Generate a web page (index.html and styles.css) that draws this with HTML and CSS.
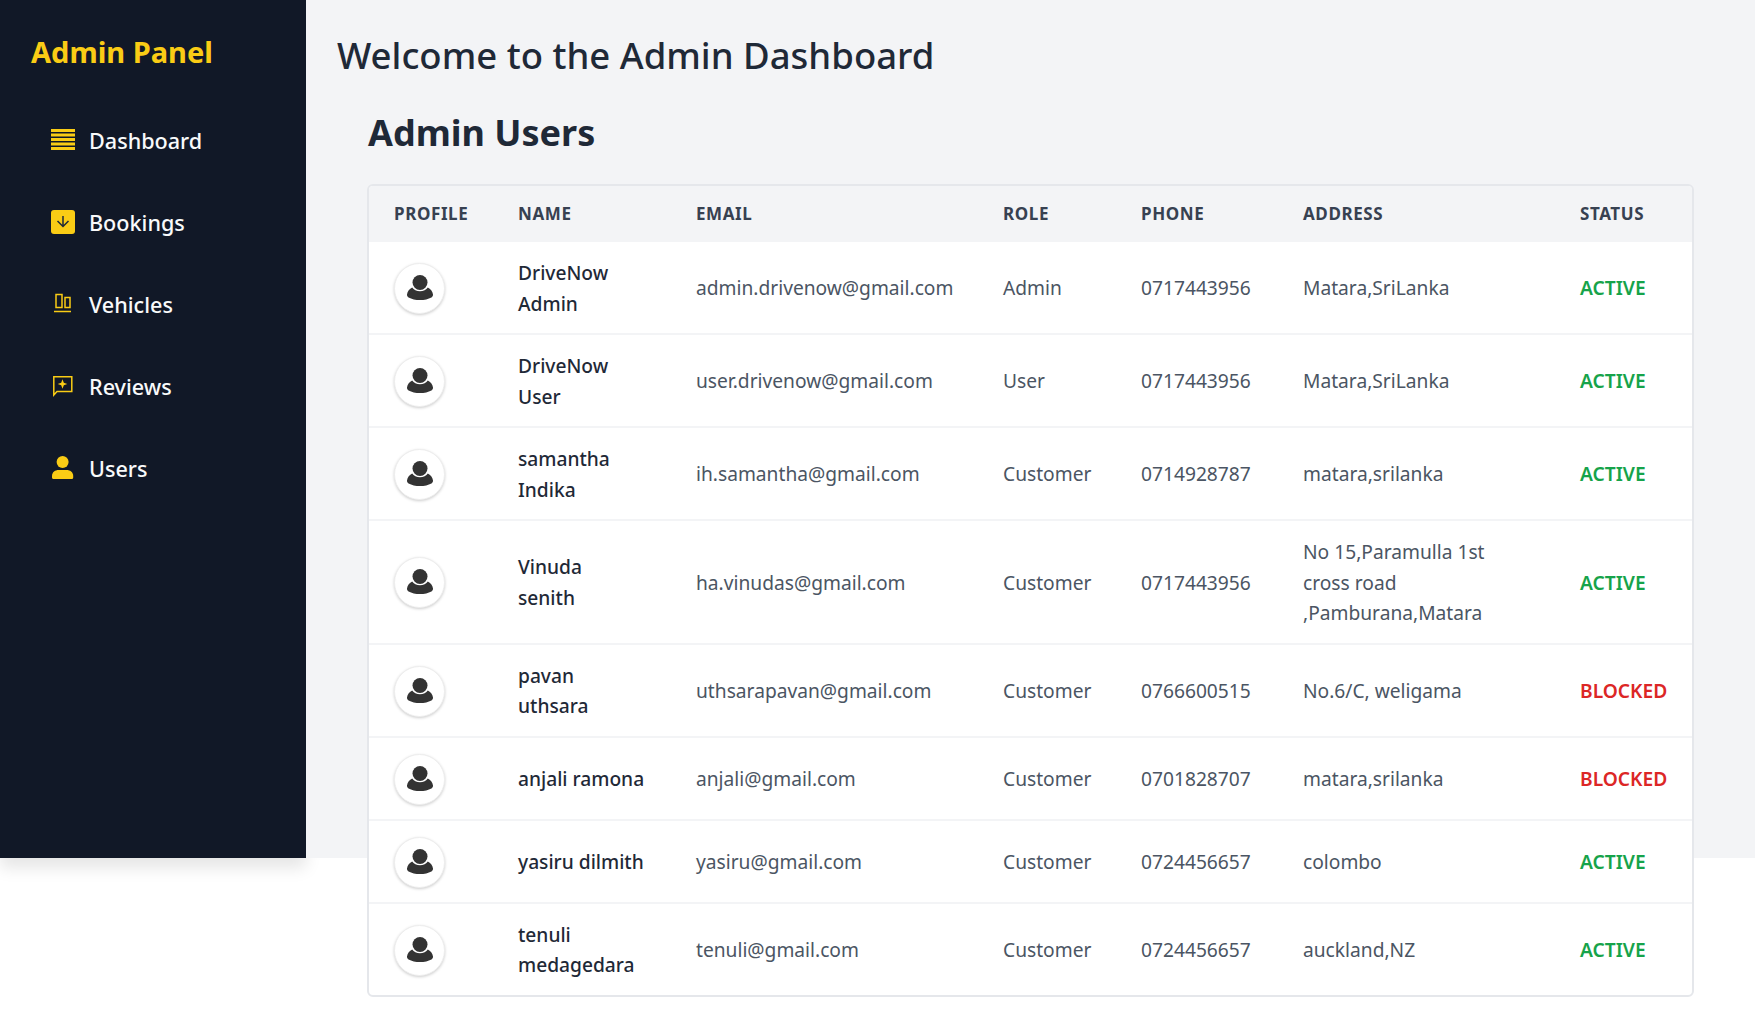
FILE: index.html
```html
<!DOCTYPE html>
<html lang="en">
<head>
    <meta charset="UTF-8">
    <title>Admin Dashboard</title>
    <link rel="stylesheet" href="styles.css">
</head>
<body>
    <svg class="sprite" width="0" height="0">
        <symbol id="avatar" viewBox="0 0 26 27">
            <circle cx="13" cy="7.500" r="7.500" fill="#333"/>
            <path d="M5.200 12.500c1.500 2.400 4.400 3.700 7.800 3.700s6.300-1.300 7.800-3.700c2.700 1.200 4.800 3.700 5.200 7 .1 1.300-.4 2.300-1.600 3-3 1.700-7 2.600-11.400 2.600s-8.400-.9-11.400-2.600C.4 21.800-.1 20.800 0 19.500c.4-3.300 2.500-5.800 5.200-7z" fill="#333"/>
        </symbol>
    </svg>

    <div class="layout">
        <aside class="sidebar">
            <h2 class="brand">Admin Panel</h2>
            <nav class="nav">
                <a class="nav-item" href="#">
                    <svg class="nav-icon" viewBox="0 0 24 24" fill="#facc15">
                        <path d="M0 1h24v3H0zM0 5.500h24v3H0zM0 10h24v3H0zM0 14.500h24v3H0zM0 19h24v3H0z"/>
                    </svg>
                    Dashboard
                </a>
                <a class="nav-item" href="#">
                    <svg class="nav-icon" viewBox="0 0 24 24">
                        <rect width="24" height="24" rx="3" fill="#facc15"/>
                        <path d="M12 6v10M6.500 11l5.500 5.500 5.500-5.500" fill="none" stroke="#1f2937" stroke-width="1.500"/>
                    </svg>
                    Bookings
                </a>
                <a class="nav-item" href="#">
                    <svg class="nav-icon" viewBox="0 0 24 24" fill="none" stroke="#facc15" stroke-width="1.500">
                        <path d="M5 2.600h6v13H5zM14 5.600h5v10h-5zM3 19.600h17"/>
                    </svg>
                    Vehicles
                </a>
                <a class="nav-item" href="#">
                    <svg class="nav-icon" viewBox="0 0 24 24">
                        <path d="M2.800 2.800h18v14.700H6L2.800 21z" fill="none" stroke="#facc15" stroke-width="1.500"/>
                        <path d="M11.500 5.200l1.300 3.500 3.500 1.300-3.500 1.300-1.300 3.500-1.300-3.500L6.700 10l3.500-1.300z" fill="#facc15"/>
                    </svg>
                    Reviews
                </a>
                <a class="nav-item" href="#">
                    <svg class="nav-icon" viewBox="0 0 24 24" fill="#facc15">
                        <circle cx="11.600" cy="6" r="6"/>
                        <path d="M2.500 23c-1 0-1.500-.6-1.500-1.500v-1.500c0-4 3.300-6 6.500-6h8.200c3.200 0 6.500 2 6.500 6v1.500c0 .9-.5 1.500-1.500 1.500z"/>
                    </svg>
                    Users
                </a>
            </nav>
        </aside>

        <main class="content">
            <h1 class="page-title">Welcome to the Admin Dashboard</h1>
            <section class="users">
                <h2 class="users-title">Admin Users</h2>
                <div class="table-wrap">
                    <table class="users-table">
                        <colgroup>
                            <col class="col-profile">
                            <col class="col-name">
                            <col class="col-email">
                            <col class="col-role">
                            <col class="col-phone">
                            <col class="col-address">
                            <col class="col-status">
                        </colgroup>
                        <thead>
                            <tr>
                                <th>Profile</th>
                                <th>Name</th>
                                <th>Email</th>
                                <th>Role</th>
                                <th>Phone</th>
                                <th>Address</th>
                                <th>Status</th>
                            </tr>
                        </thead>
                        <tbody>
                            <tr>
                                <td><span class="avatar"><svg><use href="#avatar"/></svg></span></td>
                                <td class="name">DriveNow<br>Admin</td>
                                <td>admin.drivenow@gmail.com</td>
                                <td>Admin</td>
                                <td>0717443956</td>
                                <td>Matara,SriLanka</td>
                                <td class="active">ACTIVE</td>
                            </tr>
                            <tr>
                                <td><span class="avatar"><svg><use href="#avatar"/></svg></span></td>
                                <td class="name">DriveNow<br>User</td>
                                <td>user.drivenow@gmail.com</td>
                                <td>User</td>
                                <td>0717443956</td>
                                <td>Matara,SriLanka</td>
                                <td class="active">ACTIVE</td>
                            </tr>
                            <tr>
                                <td><span class="avatar"><svg><use href="#avatar"/></svg></span></td>
                                <td class="name">samantha<br>Indika</td>
                                <td>ih.samantha@gmail.com</td>
                                <td>Customer</td>
                                <td>0714928787</td>
                                <td>matara,srilanka</td>
                                <td class="active">ACTIVE</td>
                            </tr>
                            <tr>
                                <td><span class="avatar"><svg><use href="#avatar"/></svg></span></td>
                                <td class="name">Vinuda<br>senith</td>
                                <td>ha.vinudas@gmail.com</td>
                                <td>Customer</td>
                                <td>0717443956</td>
                                <td>No 15,Paramulla 1st<br>cross road<br>,Pamburana,Matara</td>
                                <td class="active">ACTIVE</td>
                            </tr>
                            <tr>
                                <td><span class="avatar"><svg><use href="#avatar"/></svg></span></td>
                                <td class="name">pavan<br>uthsara</td>
                                <td>uthsarapavan@gmail.com</td>
                                <td>Customer</td>
                                <td>0766600515</td>
                                <td>No.6/C, weligama</td>
                                <td class="blocked">BLOCKED</td>
                            </tr>
                            <tr>
                                <td><span class="avatar"><svg><use href="#avatar"/></svg></span></td>
                                <td class="name">anjali ramona</td>
                                <td>anjali@gmail.com</td>
                                <td>Customer</td>
                                <td>0701828707</td>
                                <td>matara,srilanka</td>
                                <td class="blocked">BLOCKED</td>
                            </tr>
                            <tr>
                                <td><span class="avatar"><svg><use href="#avatar"/></svg></span></td>
                                <td class="name">yasiru dilmith</td>
                                <td>yasiru@gmail.com</td>
                                <td>Customer</td>
                                <td>0724456657</td>
                                <td>colombo</td>
                                <td class="active">ACTIVE</td>
                            </tr>
                            <tr>
                                <td><span class="avatar"><svg><use href="#avatar"/></svg></span></td>
                                <td class="name">tenuli<br>medagedara</td>
                                <td>tenuli@gmail.com</td>
                                <td>Customer</td>
                                <td>0724456657</td>
                                <td>auckland,NZ</td>
                                <td class="active">ACTIVE</td>
                            </tr>
                        </tbody>
                    </table>
                </div>
            </section>
        </main>
    </div>
</body>
</html>
```

FILE: styles.css
```css
* {
    margin: 0;
    padding: 0;
    box-sizing: border-box;
}

body {
    font-family: "Noto Sans", "Open Sans", sans-serif;
    background: white;
    color: #1f2937;
}

.sprite {
    display: block;
}

.layout {
    display: flex;
    align-items: flex-start;
    min-height: 1025px;
}

.sidebar {
    width: 306px;
    height: 858px;
    flex-shrink: 0;
    background: #111827;
    padding: 30px 31px;
    box-shadow: 0 10px 15px rgba(0, 0, 0, 0.1);
}

.brand {
    color: #facc15;
    font-size: 29px;
    line-height: 44px;
    font-weight: 700;
}

.nav {
    display: flex;
    flex-direction: column;
    gap: 32px;
    margin-top: 41px;
    padding-left: 20px;
}

.nav-item {
    display: flex;
    align-items: center;
    gap: 14px;
    height: 50px;
    color: #f9fafb;
    font-size: 21.600px;
    font-weight: 500;
    text-decoration: none;
}

.nav-icon {
    width: 24px;
    height: 24px;
    flex-shrink: 0;
}

/* grey stops at the old viewport height, the table runs past it */
.content {
    flex: 1;
    min-width: 0;
    background: linear-gradient(#f3f4f6, #f3f4f6) top / 100% 858px no-repeat;
    padding: 30px 31px;
}

.page-title {
    font-size: 36.500px;
    line-height: 50px;
    font-weight: 500;
}

.users {
    padding: 0 30px;
    margin-top: 28px;
}

.users-title {
    padding-left: 1px;
    font-size: 36px;
    line-height: 50px;
    font-weight: 700;
}

.table-wrap {
    margin-top: 26px;
    background: white;
    border: 2px solid #e5e7eb;
    border-radius: 6px;
    overflow: hidden;
}

.users-table {
    width: 100%;
    table-layout: fixed;
    border-collapse: collapse;
}

.col-profile { width: 124px; }
.col-name { width: 178px; }
.col-email { width: 307px; }
.col-role { width: 138px; }
.col-phone { width: 162px; }
.col-address { width: 277px; }

.users-table th {
    height: 55px;
    padding: 0 25px;
    background: #f3f4f6;
    color: #374151;
    font-size: 17px;
    font-weight: 700;
    letter-spacing: 0.6px;
    text-align: left;
    text-transform: uppercase;
}

.users-table td {
    padding: 16px 25px 14px;
    border-top: 2px solid #f3f4f6;
    color: #4b5563;
    font-size: 19.200px;
    line-height: 30.500px;
}

.users-table td.name {
    color: #1f2937;
    font-weight: 500;
}

.users-table td.active,
.users-table td.blocked {
    font-weight: 600;
    white-space: nowrap;
}

.users-table td.active {
    color: #16a34a;
}

.users-table td.blocked {
    color: #dc2626;
}

.avatar {
    display: flex;
    align-items: center;
    justify-content: center;
    width: 51px;
    height: 51px;
    background: white;
    border: 1px solid #eeeeee;
    border-radius: 50%;
    box-shadow: 0 1px 3px rgba(0, 0, 0, 0.2);
}

.avatar svg {
    width: 26px;
    height: 27px;
}
```
